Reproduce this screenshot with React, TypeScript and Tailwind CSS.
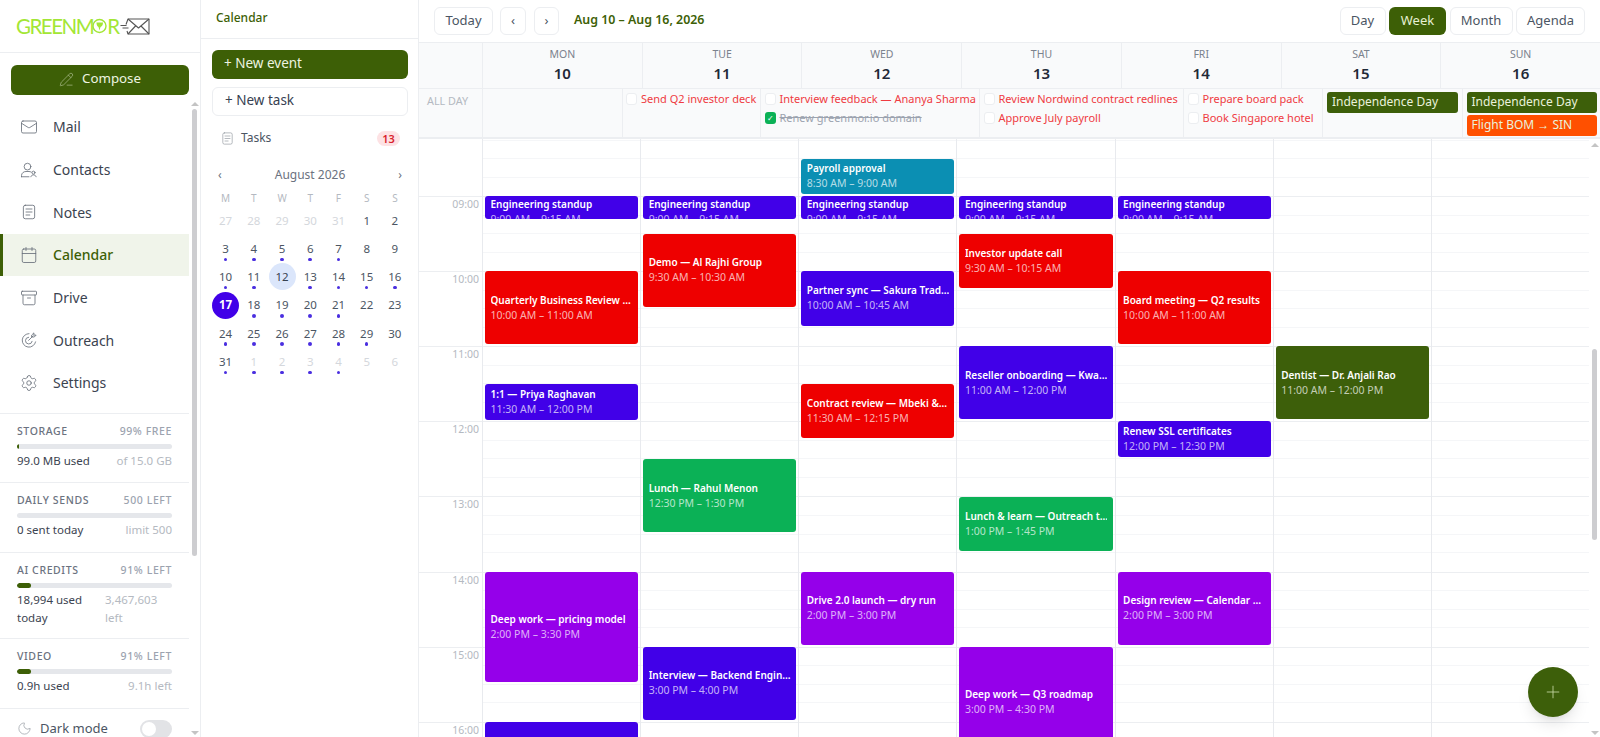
import React from "react";
import { Archive, Calendar, Mail, Moon, PencilLine, Plus, Settings } from "lucide-react";

const GREEN = "#3d5f06";

const ContactsIcon = ({ size, strokeWidth, className }: { size: number; strokeWidth: number; className?: string }) => (
  <svg width={size} height={size} viewBox="0 0 24 24" fill="none" stroke="currentColor" strokeWidth={strokeWidth} strokeLinecap="round" strokeLinejoin="round" className={className}>
    <circle cx="10" cy="7.500" r="4.500" />
    <path d="M2 21v-1.500c0-3.500 3-5.500 6-5.500h4c1 0 2 .3 3 .8M2 21h10" />
    <circle cx="18" cy="15.500" r="2" />
    <path d="M14.500 21c.4-1.800 2-2.500 3.500-2.500s3 .7 3.500 2.500" />
  </svg>
);

const NotesIcon = ({ size, strokeWidth, className }: { size: number; strokeWidth: number; className?: string }) => (
  <svg width={size} height={size} viewBox="0 0 24 24" fill="none" stroke="currentColor" strokeWidth={strokeWidth} strokeLinecap="round" strokeLinejoin="round" className={className}>
    <rect x="4.500" y="3" width="15" height="18" rx="2.500" />
    <path d="M8 8h8M8 12h8M8 16h5" />
  </svg>
);

const OutreachIcon = ({ size, strokeWidth, className }: { size: number; strokeWidth: number; className?: string }) => (
  <svg width={size} height={size} viewBox="0 0 24 24" fill="none" stroke="currentColor" strokeWidth={strokeWidth} strokeLinecap="round" strokeLinejoin="round" className={className}>
    <path d="M12 3.500a9 9 0 1 0 8.800 11" />
    <path d="M11.500 8.300a4.500 4.500 0 1 0 4.700 5.500" />
    <path d="M11.500 12.500 17.500 6.500" />
    <path d="M16 5 18.500 2.500v3h3L19 8h-3z" />
  </svg>
);

const nav = [
  { label: "Mail", Icon: Mail },
  { label: "Contacts", Icon: ContactsIcon },
  { label: "Notes", Icon: NotesIcon },
  { label: "Calendar", Icon: Calendar, active: true },
  { label: "Drive", Icon: Archive },
  { label: "Outreach", Icon: OutreachIcon },
  { label: "Settings", Icon: Settings },
];

const usage = [
  { title: "STORAGE", right: "99% FREE", bar: 1, left: "99.0 MB used", sub: "of 15.0 GB", h: "h-[69px]" },
  { title: "DAILY SENDS", right: "500 LEFT", bar: 0, left: "0 sent today", sub: "limit 500", h: "h-[70px]" },
  { title: "AI CREDITS", right: "91% LEFT", bar: 9, left: "18,994 used today", sub: "3,467,603 left", h: "h-[86px]", wrap: true },
  { title: "VIDEO", right: "91% LEFT", bar: 9, left: "0.9h used", sub: "9.1h left", h: "h-[70px]" },
];

// [label, muted, has dot]
const miniDays: [number, boolean, boolean][] = [
  [27, true, false], [28, true, false], [29, true, false], [30, true, false], [31, true, false], [1, false, false], [2, false, false],
  [3, false, true], [4, false, true], [5, false, true], [6, false, true], [7, false, true], [8, false, false], [9, false, false],
  [10, false, true], [11, false, true], [12, false, false], [13, false, true], [14, false, true], [15, false, true], [16, false, true],
  [17, false, false], [18, false, true], [19, false, true], [20, false, true], [21, false, true], [22, false, false], [23, false, false],
  [24, false, true], [25, false, true], [26, false, true], [27, false, true], [28, false, true], [29, false, true], [30, false, false],
  [31, false, true], [1, true, true], [2, true, true], [3, true, true], [4, true, true], [5, true, false], [6, true, false],
];

const weekHead = [
  ["MON", "10"], ["TUE", "11"], ["WED", "12"], ["THU", "13"], ["FRI", "14"], ["SAT", "15"], ["SUN", "16"],
];

const INDIGO = "bg-[#4100e8]";
const RED = "bg-[#ee0000]";
const PURPLE = "bg-[#9500ea]";
const LIME = "bg-[#0bb156]";
const TEAL = "bg-[#0b8fb3]";
const OLIVE = "bg-[#3d5f0a]";

type Ev = { title: string; time: string; start: number; mins: number; color: string };

const week: Ev[][] = [
  [
    { title: "Engineering standup", time: "9:00 AM – 9:15 AM", start: 9, mins: 15, color: INDIGO },
    { title: "Quarterly Business Review …", time: "10:00 AM – 11:00 AM", start: 10, mins: 60, color: RED },
    { title: "1:1 — Priya Raghavan", time: "11:30 AM – 12:00 PM", start: 11.5, mins: 30, color: INDIGO },
    { title: "Deep work — pricing model", time: "2:00 PM – 3:30 PM", start: 14, mins: 90, color: PURPLE },
    { title: "Vendor call — Salesforce", time: "4:00 PM – 4:45 PM", start: 16, mins: 45, color: INDIGO },
  ],
  [
    { title: "Engineering standup", time: "9:00 AM – 9:15 AM", start: 9, mins: 15, color: INDIGO },
    { title: "Demo — Al Rajhi Group", time: "9:30 AM – 10:30 AM", start: 9.5, mins: 60, color: RED },
    { title: "Lunch — Rahul Menon", time: "12:30 PM – 1:30 PM", start: 12.5, mins: 60, color: LIME },
    { title: "Interview — Backend Engin…", time: "3:00 PM – 4:00 PM", start: 15, mins: 60, color: INDIGO },
  ],
  [
    { title: "Payroll approval", time: "8:30 AM – 9:00 AM", start: 8.5, mins: 30, color: TEAL },
    { title: "Engineering standup", time: "9:00 AM – 9:15 AM", start: 9, mins: 15, color: INDIGO },
    { title: "Partner sync — Sakura Trad…", time: "10:00 AM – 10:45 AM", start: 10, mins: 45, color: INDIGO },
    { title: "Contract review — Mbeki &…", time: "11:30 AM – 12:15 PM", start: 11.5, mins: 45, color: RED },
    { title: "Drive 2.0 launch — dry run", time: "2:00 PM – 3:00 PM", start: 14, mins: 60, color: PURPLE },
  ],
  [
    { title: "Engineering standup", time: "9:00 AM – 9:15 AM", start: 9, mins: 15, color: INDIGO },
    { title: "Investor update call", time: "9:30 AM – 10:15 AM", start: 9.5, mins: 45, color: RED },
    { title: "Reseller onboarding — Kwa…", time: "11:00 AM – 12:00 PM", start: 11, mins: 60, color: INDIGO },
    { title: "Lunch & learn — Outreach t…", time: "1:00 PM – 1:45 PM", start: 13, mins: 45, color: LIME },
    { title: "Deep work — Q3 roadmap", time: "3:00 PM – 4:30 PM", start: 15, mins: 90, color: PURPLE },
  ],
  [
    { title: "Engineering standup", time: "9:00 AM – 9:15 AM", start: 9, mins: 15, color: INDIGO },
    { title: "Board meeting — Q2 results", time: "10:00 AM – 11:00 AM", start: 10, mins: 60, color: RED },
    { title: "Renew SSL certificates", time: "12:00 PM – 12:30 PM", start: 12, mins: 30, color: INDIGO },
    { title: "Design review — Calendar …", time: "2:00 PM – 3:00 PM", start: 14, mins: 60, color: PURPLE },
  ],
  [{ title: "Dentist — Dr. Anjali Rao", time: "11:00 AM – 12:00 PM", start: 11, mins: 60, color: OLIVE }],
  [],
];

const HOUR = 75.1;
const hours = [8, 9, 10, 11, 12, 13, 14, 15, 16];

const Logo = () => (
  <div className="flex items-center h-[53px] pl-4 border-b border-[#eceef1]">
    <span className="font-['Lato'] text-[20.500px] leading-none text-[#a3e635] tracking-[-1.500px]">GREENM</span>
    <svg width="15" height="16" viewBox="0 0 15 16" className="-ml-px shrink-0">
      <circle cx="7.500" cy="8" r="6.500" fill="none" stroke="#a3e635" strokeWidth="1.400" />
      <path d="M4.500 4.500h6.500c0 3-1.500 4-2.500 4.500l-1 3.500-1-3.500c-1.500-.5-2-2.500-2-4.500z" fill="#a3e635" />
    </svg>
    <span className="font-['Lato'] text-[20.500px] leading-none text-[#a3e635]">R</span>
    <svg width="30" height="17" viewBox="0 0 30 17" fill="none" stroke="#555" strokeWidth="1.100" strokeLinejoin="round" className="shrink-0">
      <path d="M0.500 7.500h6M2.500 10h6" />
      <path d="M6 6.500 8 1h21v15H8l-1-3" />
      <path d="M8 1l10.500 9L29 1M8 16l7.500-8M29 16l-8-8" />
    </svg>
  </div>
);

const SideScroll = () => (
  <div className="w-[11px] flex flex-col items-center">
    <div className="w-0 h-0 mt-[49px] border-x-[4px] border-x-transparent border-b-[4px] border-b-[#c4c4c4]" />
    <div className="w-[5px] h-[447px] mt-[3px] rounded-full bg-[#cdcdd0]" />
    <div className="flex-1" />
    <div className="w-0 h-0 mb-[2px] border-x-[4px] border-x-transparent border-t-[4px] border-t-[#c4c4c4]" />
  </div>
);

const MainSidebar = () => (
  <aside className="w-[201px] shrink-0 flex flex-col border-r border-[#eceef1] overflow-hidden">
    <Logo />
    <div className="flex-1 flex min-h-0">
      <div className="w-[189px] shrink-0 flex flex-col">
        <div className="pl-[11px] pt-3 pb-[10.500px]">
          <button className="w-[178px] h-[30px] pb-[2px] rounded-md flex items-center justify-center gap-2 text-[13.300px] text-[#eef5e0]" style={{ backgroundColor: GREEN }}>
            <PencilLine size={15} strokeWidth={1} className="text-[#b9c99d]" />
            Compose
          </button>
        </div>
        <nav className="flex flex-col">
          {nav.map(({ label, Icon, active }) => (
            <a
              key={label}
              className={
                active
                  ? "h-[42.700px] flex items-center gap-[15px] pl-[17px] text-[14px] font-medium border-l-[3px] border-[#3d5f06] bg-[#f0f4ea] text-[#3d5f06]"
                  : "h-[42.700px] flex items-center gap-[15px] pl-[20px] text-[14px] text-[#3b4350]"
              }
            >
              <Icon size={18} strokeWidth={1.1} className="text-[#666d78]" />
              {label}
            </a>
          ))}
        </nav>
        <div className="flex-1 min-h-0 flex flex-col mt-[9px]">
          {usage.map((u) => (
            <div key={u.title} className={`${u.h} shrink-0 border-t border-[#eceef1] pl-[17px] pr-[17px] pt-[10px]`}>
              <div className="flex justify-between text-[10.500px] leading-[14px] tracking-[0.600px] font-medium">
                <span className="text-[#6b7280]">{u.title}</span>
                <span className="text-[#9ca3af]">{u.right}</span>
              </div>
              <div className="h-[5px] mt-[6px] rounded-full bg-[#e5e7eb] overflow-hidden">
                <div className="h-full rounded-full bg-[#3d5f06]" style={{ width: `${u.bar}%` }} />
              </div>
              <div className="flex justify-between mt-[3px] text-[11.500px] leading-[17.500px]">
                <span className={u.wrap ? "w-[75px] text-[#3b4350]" : "text-[#3b4350]"}>{u.left}</span>
                <span className={u.wrap ? "w-[67px] text-[#b4b9c1]" : "text-[#b4b9c1]"}>{u.sub}</span>
              </div>
            </div>
          ))}
          <div className="border-t border-[#eceef1] flex items-center shrink-0 h-[40px] pl-[17px] pr-[17px] text-[13px] text-[#4b5563]">
            <Moon size={15} strokeWidth={1} className="text-[#8a9099] mr-[8px]" />
            Dark mode
            <span className="ml-auto w-[32px] h-[18px] rounded-full bg-[#e2e3e6] p-[2px]">
              <span className="block w-[14px] h-[14px] rounded-full bg-white" />
            </span>
          </div>
        </div>
      </div>
      <SideScroll />
    </div>
  </aside>
);

const CalendarSidebar = () => (
  <aside className="w-[218px] shrink-0 border-r border-[#eceef1]">
    <div className="h-[39px] pl-[15px] flex items-center text-[12px] font-medium text-[#3d5f06] border-b border-[#eceef1] pb-[3px]">Calendar</div>
    <div className="pl-[11px] pr-[10px] pt-[11px]">
      <button className="w-full h-[29px] pb-[2px] rounded-md pl-3 text-left text-[13.500px] text-[#eef5e0]" style={{ backgroundColor: GREEN }}>+ New event</button>
      <button className="w-full h-[29px] pb-[2px] mt-2 rounded-md pl-3 text-left text-[13.500px] text-[#374151] border border-[#eceef1]">+ New task</button>
      <div className="flex items-center h-[24px] mt-[10px] pl-2 pr-2 text-[12px] text-[#4b5563]">
        <NotesIcon size={15} strokeWidth={1} className="text-[#8a9099] mr-[6px]" />
        Tasks
        <span className="ml-auto w-[23px] h-[15px] rounded-full bg-[#fde2e4] text-[11px] leading-[15px] font-semibold text-center text-[#d91f2c]">13</span>
      </div>
      <div className="flex items-center justify-between h-[20px] mt-[15px] px-[6px] text-[12px] text-[#6b7280]">
        <span>‹</span>
        <span>August 2026</span>
        <span>›</span>
      </div>
      <div className="grid grid-cols-7 mt-[6px] -ml-[0.500px] -mr-[1px]">
        {["M", "T", "W", "T", "F", "S", "S"].map((d, i) => (
          <div key={i} className="h-[15px] flex items-center justify-center text-[10px] text-[#b4b9c1]">{d}</div>
        ))}
        {miniDays.map(([n, muted, dot], i) => (
          <div key={i} className="h-[28.300px] flex items-center justify-center relative">
            <span
              className={
                n === 17 && !muted
                  ? "w-[27px] h-[27px] rounded-full flex items-center justify-center text-[11.500px] font-bold bg-[#4100e8] text-white"
                  : n === 12 && !muted
                    ? "w-[27px] h-[27px] rounded-full flex items-center justify-center text-[11.500px] bg-[#dbe6fb] text-[#374151]"
                    : muted
                      ? "text-[11.500px] text-[#d4d7dc]"
                      : "text-[11.500px] text-[#4b5563]"
              }
            >
              {n}
            </span>
            {dot && <span className="absolute bottom-[1.500px] left-1/2 -ml-[1.750px] w-[3.500px] h-[3.500px] rounded-full bg-[#4a2fe0]" />}
          </div>
        ))}
      </div>
    </div>
  </aside>
);

const Btn = ({ children, active, w }: { children: React.ReactNode; active?: boolean; w: string }) => (
  <button
    className={`${w} h-[28px] rounded-md text-[13px] flex items-center justify-center ${active ? "bg-[#3d5f06] text-[#e6f0d3]" : "border border-[#eceef1] text-[#4b5563]"}`}
  >
    {children}
  </button>
);

const Toolbar = () => (
  <div className="h-[43px] shrink-0 flex items-center pl-[15px] pr-[15px] pb-[1px] border-b border-[#eceef1]">
    <Btn w="w-[59px]">Today</Btn>
    <Btn w="w-[26px] ml-[7px]">‹</Btn>
    <Btn w="w-[25px] ml-2">›</Btn>
    <span className="ml-[15px] text-[12.400px] font-semibold text-[#3d5f06]">Aug 10 – Aug 16, 2026</span>
    <div className="ml-auto flex gap-[3.500px]">
      <Btn w="w-[46px]">Day</Btn>
      <Btn w="w-[57px]" active>Week</Btn>
      <Btn w="w-[63px]">Month</Btn>
      <Btn w="w-[69px]">Agenda</Btn>
    </div>
  </div>
);

const Task = ({ label, done }: { label: string; done?: boolean }) => (
  <div className="flex items-center gap-[4px] h-[18.500px] whitespace-nowrap">
    {done ? (
      <span className="w-[11px] h-[12px] shrink-0 rounded-[3px] bg-[#0bb156] text-white flex items-center justify-center text-[8px] leading-none">✓</span>
    ) : (
      <span className="w-[11px] h-[12px] shrink-0 rounded-[3px] border border-[#eceef1] bg-white" />
    )}
    <span className={done ? "text-[11px] line-through text-[#9ca3af]" : "text-[11px] text-[#ef3b42]"}>{label}</span>
  </div>
);

const Chip = ({ label, color }: { label: string; color: string }) => (
  <div className={`${color} h-[21px] rounded-[3px] pl-[5px] text-[12px] leading-[20px] text-[#eaf2dc]`}>{label}</div>
);

const AllDay = () => (
  <div className="h-[50px] shrink-0 grid grid-cols-[63px_139.500px_138.500px_219px_204px_139px_139.500px_1fr] bg-[#f9fafb] border-b-2 border-[#eceef1] text-[12px]">
    <div className="text-[10.800px] text-[#b4b9c1] pl-[8px] pt-[4px] whitespace-nowrap">ALL DAY</div>
    <div className="border-l border-[#eceef1]" />
    <div className="border-l border-[#eceef1] pl-[3.500px] pt-px"><Task label="Send Q2 investor deck" /></div>
    <div className="border-l border-[#eceef1] pl-[3.500px] pt-px">
      <Task label="Interview feedback — Ananya Sharma" />
      <Task label="Renew greenmor.io domain" done />
    </div>
    <div className="border-l border-[#eceef1] pl-[3.500px] pt-px">
      <Task label="Review Nordwind contract redlines" />
      <Task label="Approve July payroll" />
    </div>
    <div className="border-l border-[#eceef1] pl-[3.500px] pt-px">
      <Task label="Prepare board pack" />
      <Task label="Book Singapore hotel" />
    </div>
    <div className="border-l border-[#eceef1] pl-[4px] pr-[4px] pt-[3px]"><Chip label="Independence Day" color="bg-[#3d5f0a]" /></div>
    <div className="border-l border-[#eceef1] pl-[4px] pr-[3px] pt-[3px] flex flex-col gap-[1.500px]">
      <Chip label="Independence Day" color="bg-[#3d5f0a]" />
      <Chip label="Flight BOM → SIN" color="bg-[#ff5000]" />
    </div>
  </div>
);

const EventCard = ({ ev }: { ev: Ev }) => {
  const short = ev.mins < 30;
  return (
    <div
      className={`absolute left-[2px] right-[2px] rounded-[3px] px-[5.500px] overflow-hidden flex flex-col text-white ${ev.color} ${short ? "justify-start pt-px" : "justify-center"}`}
      style={{ top: (ev.start - 8) * HOUR, height: Math.max(ev.mins * 1.25 - 1.8, 23) }}
    >
      <div className="shrink-0 text-[10px] leading-[15px] font-semibold whitespace-nowrap overflow-hidden">{ev.title}</div>
      <div className="shrink-0 text-[10.500px] leading-[15px] text-white/70 whitespace-nowrap">{ev.time}</div>
    </div>
  );
};

const HourBlock = () => (
  <div className="h-[75.100px] grid grid-rows-4 border-b border-[#eceef1]">
    <div className="border-b border-[#f5f6f8]" />
    <div className="border-b border-[#f5f6f8]" />
    <div className="border-b border-[#f5f6f8]" />
    <div />
  </div>
);

const TimeGrid = () => (
  <div className="flex-1 min-h-0 flex relative">
    <div className="flex-1 overflow-hidden">
      <div className="grid grid-cols-[63px_repeat(7,1fr)] -mt-[18px]">
        <div className="pt-px">
          {hours.map((h) => (
            <div key={h} className="h-[75.100px] border-b border-[#eceef1] relative">
              {h < 16 && (
                <span className="absolute -bottom-[15px] right-[3px] text-[10.500px] leading-[14px] text-[#b4b9c1]">
                  {String(h + 1).padStart(2, "0")}:00
                </span>
              )}
            </div>
          ))}
        </div>
        {week.map((day, i) => (
          <div key={i} className="relative pt-px border-l border-[#e8eaee]">
            {hours.map((h) => <HourBlock key={h} />)}
            {day.map((ev) => <EventCard key={ev.title} ev={ev} />)}
          </div>
        ))}
      </div>
    </div>
    <div className="w-[11px] flex flex-col items-center">
      <div className="w-0 h-0 mt-[4px] border-x-[4px] border-x-transparent border-b-[4px] border-b-[#c4c4c4]" />
      <div className="w-[5px] h-[191px] mt-[202px] rounded-full bg-[#cdcdd0]" />
      <div className="flex-1" />
      <div className="w-0 h-0 mb-[2px] border-x-[4px] border-x-transparent border-t-[4px] border-t-[#c4c4c4]" />
    </div>
    <button className="absolute right-[22px] bottom-[20px] w-[50px] h-[50px] rounded-full bg-[#3d5f0a] flex items-center justify-center shadow-lg">
      <Plus size={20} strokeWidth={1} className="text-[#c9dba8]" />
    </button>
  </div>
);

export default function App() {
  return (
    <div className="w-[1600px] h-[737px] flex overflow-hidden bg-white font-['Noto_Sans',sans-serif]">
      <MainSidebar />
      <CalendarSidebar />
      <main className="flex-1 min-w-0 flex flex-col">
        <Toolbar />
        <div className="h-[46px] shrink-0 grid grid-cols-[63px_repeat(7,1fr)] bg-[#f9fafb] border-b border-[#eceef1]">
          <div />
          {weekHead.map(([d, n]) => (
            <div key={d} className="border-l border-[#eceef1] flex flex-col items-center pt-[4px]">
              <span className="text-[10.500px] leading-[15px] text-[#7b828d]">{d}</span>
              <span className="text-[15px] leading-[22px] font-semibold text-[#1f2937]">{n}</span>
            </div>
          ))}
        </div>
        <AllDay />
        <TimeGrid />
      </main>
    </div>
  );
}
